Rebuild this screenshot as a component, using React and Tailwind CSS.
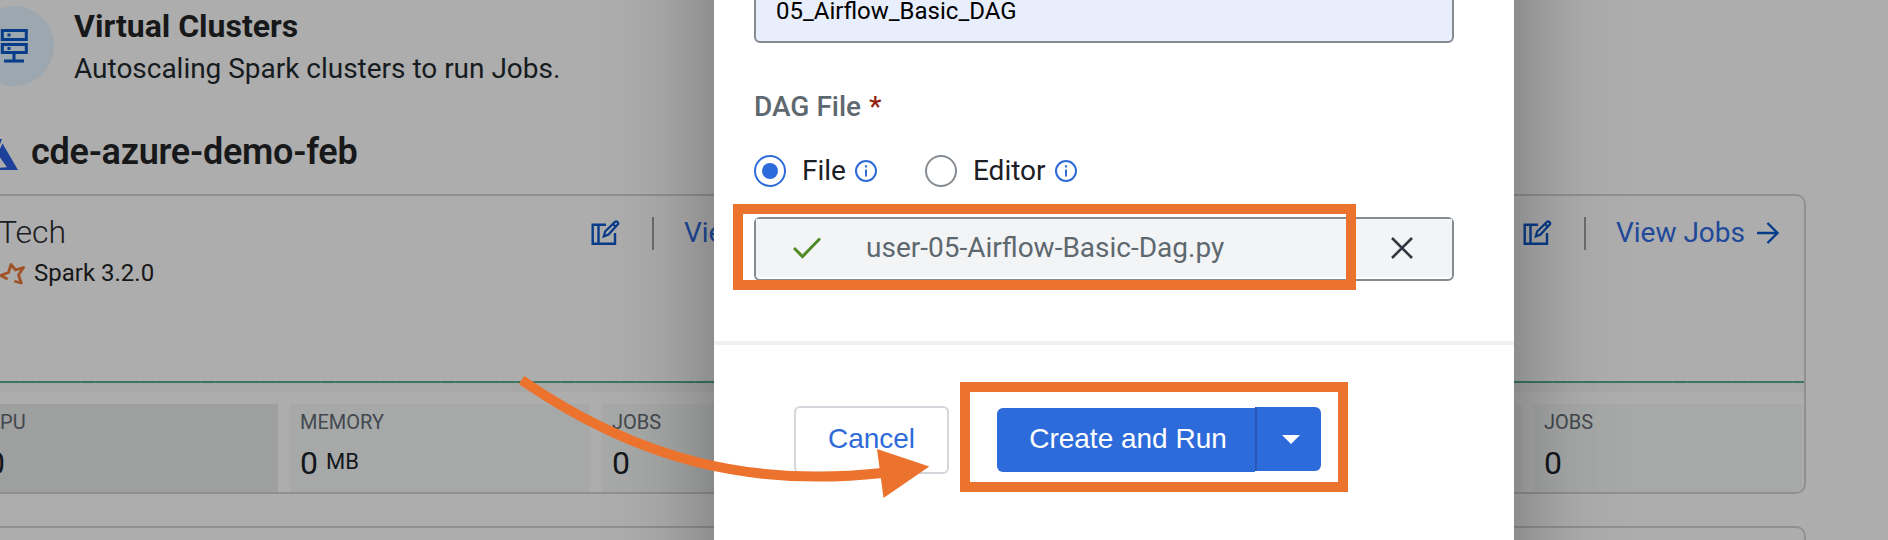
const ServerIcon = () => (
  <svg className="h-[34px] w-[28px] shrink-0" viewBox="0 0 28 34" fill="none" stroke="#073c8b" strokeWidth="3">
    <path d="M2.300 1.500h24v9h-24zM2.300 15.500h24v8h-24zM14 24v8M4 32h20" />
    <path d="M7.500 6h3M7.500 19.500h3" />
  </svg>
);

const AzureIcon = () => (
  <svg className="h-[32px] w-[36px] shrink-0" viewBox="0 0 36 32" fill="#1d409a">
    <path d="M17 0h3l-8 22H2z" />
    <path d="M20.500 4.500L36 31H8v-1.500L25 28.300 15.500 15z" />
  </svg>
);

const SparkIcon = () => (
  <svg className="h-[24px] w-[28px] shrink-0" viewBox="0 0 28 24" fill="none" stroke="#9f5326" strokeWidth="2.800" strokeLinejoin="round" strokeLinecap="round">
    <path d="M7.500 17.500L1.500 14.500 9.500 11.500 12 3.500 16.500 9l8-2.500-5 7.500 2.800 8-5.800-1.500" />
  </svg>
);

const EditIcon = () => (
  <svg className="h-[26px] w-[30px] shrink-0" viewBox="0 0 30 26" fill="none" stroke="#073c8b" strokeWidth="2.400">
    <path d="M15 4.700H1.700v19h22.300V13M7.500 4.500v19" />
    <path d="M12.800 16.500l1.300-5L24 1.900q1.200-1 2.500.2t.2 2.500L17.500 14.600zM22 4l3 3" strokeWidth="2.200" />
  </svg>
);

const ArrowIcon = () => (
  <svg className="h-[22px] w-[22px] shrink-0" viewBox="0 0 22 22" fill="none" stroke="#073c8b" strokeWidth="2.400">
    <path d="M0 11h20M10.500 1l10 10-10 10" />
  </svg>
);

const InfoIcon = () => (
  <svg className="h-[22px] w-[22px] shrink-0" viewBox="0 0 22 22" fill="none" stroke="#2e6bda" strokeWidth="2">
    <circle cx="11" cy="11" r="10" />
    <path d="M11 9.500v7M11 5.200v2.200" />
  </svg>
);

const Stat = ({ label, value, unit, className }) => (
  <div className={"flex flex-col pt-[5px] " + className}>
    <span className="text-[20px] leading-[26px] text-[#43484e]">{label}</span>
    <span className="mt-[9px] flex items-baseline gap-2 text-[32px] leading-[38px] text-[#13171b]">
      {value}
      {unit && <span className="relative -top-[5px] text-[22px]">{unit}</span>}
    </span>
  </div>
);

const ClusterCard = () => (
  <div className="flex h-[300px] w-[900px] shrink-0 flex-col overflow-hidden rounded-[10px] border-2 border-[#8f9091]">
    <div className="flex h-[185px] justify-between pl-[23px] pr-[25px]">
      <div className="flex flex-col pt-[16px]">
        <span className="-ml-px text-[32px] font-light leading-[40px] text-[#1b1c1d]">Tech</span>
        <span className="mt-[5px] flex items-center gap-[7px] text-[24px] leading-[32px] text-[#161718]">
          <SparkIcon />
          Spark 3.2.0
        </span>
      </div>
      <div className="flex h-[74px] items-center">
        <EditIcon />
        <span className="ml-[31px] h-[33px] w-[2px] bg-[#6a6d71]" />
        <span className="ml-[30px] text-[28px] text-[#20499a]">View Jobs</span>
        <span className="ml-[12px] flex">
          <ArrowIcon />
        </span>
      </div>
    </div>
    <div className="h-[2px] shrink-0 bg-[repeating-linear-gradient(90deg,#3b7661_0px,#3b7661_14px,#4c8270_14px,#4c8270_15px)]" />
    <div className="h-[9px] shrink-0 bg-[#a8a8a8]" />
    <div className="mt-[12px] flex grow gap-3">
      <Stat label="CPU" value="0" className="w-[302px] bg-[#9e9f9f] pl-[11px]" />
      <Stat label="MEMORY" value="0" unit="MB" className="w-[300px] bg-[#a7a9a9] pl-[10px]" />
      <Stat label="JOBS" value="0" className="w-[268px] bg-[#a7a9a9] pl-[10px]" />
    </div>
  </div>
);

const Radio = ({ checked }) =>
  checked ? (
    <span className="flex size-8 items-center justify-center rounded-full border-2 border-[#2e6bda]">
      <span className="size-4 rounded-full bg-[#2e6bda]" />
    </span>
  ) : (
    <span className="size-8 rounded-full border-2 border-[#858b91]" />
  );

const Page = () => (
  <div className="-ml-[26px] flex w-[1914px] flex-col pt-[6px]">
    <div className="flex h-20 gap-5">
      <div className="flex size-20 shrink-0 items-center justify-center rounded-full bg-[#9da7af]">
        <ServerIcon />
      </div>
      <div className="flex flex-col">
        <span className="text-[32px] font-bold leading-[40px] text-[#171819]">Virtual Clusters</span>
        <span className="mt-[2px] text-[28px] leading-[42px] tracking-[-0.020px] text-[#161b20]">
          Autoscaling Spark clusters to run Jobs.
        </span>
      </div>
    </div>
    <div className="mt-[44px] flex h-[44px] gap-[13px] pl-[8px]">
      <span className="mt-[9px]">
        <AzureIcon />
      </span>
      <span className="text-[36px] font-semibold leading-[44px] tracking-[-0.250px] text-[#171819]">cde-azure-demo-feb</span>
    </div>
    <div className="mt-[20px] flex gap-8">
      <ClusterCard />
      <ClusterCard />
    </div>
    <div className="mt-8 flex gap-8">
      <div className="h-20 w-[900px] rounded-[10px] border-2 border-[#8f9091]" />
      <div className="h-20 w-[900px] rounded-[10px] border-2 border-[#8f9091]" />
    </div>
  </div>
);

const Modal = () => (
  <div className="absolute -inset-y-[200px] left-[714px] flex w-[800px] flex-col bg-white py-[200px] shadow-[0_0_96px_rgba(0,0,0,0.36)]">
    <div className="flex h-[341px] flex-col pl-[40px] pr-[60px]">
      <div className="-mt-[20px] flex h-[63px] shrink-0 items-end rounded-[6px] border-2 border-[#858b93] bg-[#e8eefc] pb-[14px] pl-[20px] text-[24px] leading-[32px] text-black">
        05_Airflow_Basic_DAG
      </div>
      <div className="mt-[44px] flex gap-2 text-[28px] font-medium leading-[40px] text-[#5e686f]">
        DAG File <span className="text-[#921f12]">*</span>
      </div>
      <div className="mt-[24px] flex h-[40px] items-center text-[28px] text-[#1b2026]">
        <Radio checked />
        <span className="ml-[16px] mr-[9px]">File</span>
        <InfoIcon />
        <span className="ml-[48px] flex">
          <Radio />
        </span>
        <span className="ml-[16px] mr-[9px]">Editor</span>
        <InfoIcon />
      </div>
      <div className="mt-[26px] flex h-[64px] items-center rounded-[6px] border-2 border-[#858b93] bg-white pb-[2px]">
        <div className="flex h-full grow items-center bg-[#f3f4f6] pl-[37px] pr-[39px]">
          <svg className="h-[22px] w-[28px]" viewBox="0 0 28 22" fill="none" stroke="#4f8a26" strokeWidth="3">
            <path d="M1 11l8.500 8.500L27 1.500" />
          </svg>
          <span className="ml-[45px] grow text-[28px] text-[#5e686f]">user-05-Airflow-Basic-Dag.py</span>
          <svg className="h-[22px] w-[22px]" viewBox="0 0 22 22" fill="none" stroke="#2f3841" strokeWidth="2.600">
            <path d="M1 1l20 20M21 1L1 21" />
          </svg>
        </div>
      </div>
    </div>
    <div className="h-1 shrink-0 bg-[#f1f1f2]" />
    <div className="flex items-start pl-[80px] pt-[61px] font-['Liberation_Sans',Arial,sans-serif] text-[28px]">
      <button className="h-[68px] w-[155px] rounded-[6px] border-2 border-[#d5d6db] pb-[2px] text-[#2e6bda]">Cancel</button>
      <button className="ml-[48px] mt-[2px] h-[64px] w-[258px] rounded-l-[6px] bg-[#2e6bda] pb-[2px] pl-[4px] text-white">
        Create and Run
      </button>
      <button className="mt-[1px] flex h-[64px] w-[66px] items-center justify-center rounded-r-[6px] border-l-2 border-[#2857b8] bg-[#2e6bda] pl-[4px]">
        <svg className="h-[9px] w-[18px]" viewBox="0 0 18 9" fill="white">
          <path d="M0 0h18L9 9z" />
        </svg>
      </button>
    </div>
  </div>
);

const Annotations = () => (
  <>
    <div className="absolute left-[733px] top-[204px] h-[86px] w-[623px] border-[10px] border-[#ec732d]" />
    <div className="absolute left-[960px] top-[382px] h-[110px] w-[388px] border-[10px] border-[#ec732d]" />
    <svg className="absolute left-[510px] top-[370px] h-[135px] w-[430px]" viewBox="510 370 430 135">
      <path d="M521.500 380C640 462 755 487 882 473" fill="none" stroke="#ec732d" strokeWidth="10" />
      <path d="M877 449L929.300 466.500L883.500 498z" fill="#ec732d" />
    </svg>
  </>
);

export default function App() {
  return (
    <div className="relative h-[540px] w-[1888px] overflow-hidden bg-[#adadad] font-[Roboto,sans-serif]">
      <Page />
      <Modal />
      <Annotations />
    </div>
  );
}
